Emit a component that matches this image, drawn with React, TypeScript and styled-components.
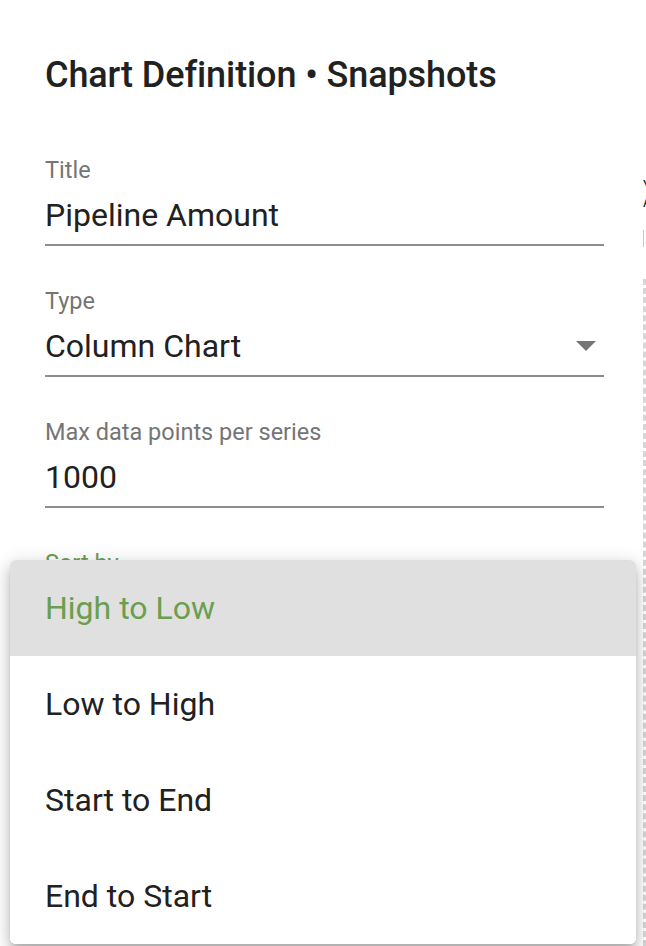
import React, { FC } from 'react';
import styled, { createGlobalStyle } from 'styled-components';

const GlobalStyle = createGlobalStyle`
    html, body {
        margin: 0;
        padding: 0;
        background: #fff;
        font-family: Roboto, "Noto Sans", sans-serif;
        color: #212121;
    }
    #root {
        width: 646px;
        height: 946px;
        overflow: hidden;
        position: relative;
    }
`

interface LabelProps {
    focused?: boolean;
}

interface ItemProps {
    selected?: boolean;
}

const Page = styled.div`
    display: flex;
    width: 646px;
    height: 946px;
    overflow: hidden;
    position: relative;
`

const FormPanel = styled.div`
    flex: 0 0 643px;
    box-sizing: border-box;
    padding: 53px 39px 0 45px;
    display: flex;
    flex-direction: column;
`

const Heading = styled.h1`
    margin: 0 0 59px;
    font-size: 36px;
    font-weight: 500;
    line-height: 44px;
    letter-spacing: -0.1px;
    color: #212121;
`

const Field = styled.div`
    display: flex;
    flex-direction: column;
    margin-bottom: 41px;
`

const Label = styled.label<LabelProps>`
    font-size: 23.5px;
    line-height: 28px;
    color: ${({focused}) => focused ? '#6b9e50' : '#757575'};
`

const Control = styled.div<LabelProps>`
    display: flex;
    align-items: center;
    justify-content: space-between;
    box-sizing: border-box;
    height: 62px;
    padding-top: 2px;
    border-bottom: 2px solid ${({focused}) => focused ? '#6b9e50' : '#8c8c8c'};
    font-size: 32px;
    color: #212121;
`

const Arrow = styled.span`
    width: 0;
    height: 0;
    margin-right: 8px;
    border-left: 10px solid transparent;
    border-right: 10px solid transparent;
    border-top: 10px solid #757575;
`

const SidePanel = styled.div`
    flex: 1 0 auto;
    display: flex;
    flex-direction: column;
    padding-top: 178px;
`

const SideText = styled.div`
    font-size: 14px;
    line-height: 16px;
    color: #212121;
    white-space: nowrap;
`

const SideInput = styled.div`
    margin-top: 20px;
    height: 18px;
    border-left: 1px solid #c8c8c8;
`

const DashedBox = styled.div`
    margin-top: 32px;
    height: 700px;
    border-left: 3px dashed #d6d6d6;
`

const Menu = styled.ul`
    position: absolute;
    left: 10px;
    top: 560px;
    width: 626px;
    margin: 0;
    padding: 0;
    list-style: none;
    background: #fff;
    border-radius: 6px;
    overflow: hidden;
    box-shadow: 0 5px 6px -3px rgba(0, 0, 0, 0.2), 0 9px 14px 1px rgba(0, 0, 0, 0.14), 0 3px 18px 2px rgba(0, 0, 0, 0.12);
`

const MenuItem = styled.li<ItemProps>`
    display: flex;
    align-items: center;
    height: 96px;
    padding-left: 35px;
    font-size: 32px;
    color: ${({selected}) => selected ? '#6b9e50' : '#212121'};
    background: ${({selected}) => selected ? '#e0e0e0' : '#fff'};
`

const sortOptions = ['High to Low', 'Low to High', 'Start to End', 'End to Start'];

const App: FC = () => {
    return (
        <Page>
            <GlobalStyle />
            <FormPanel>
                <Heading>Chart Definition • Snapshots</Heading>
                <Field>
                    <Label>Title</Label>
                    <Control>Pipeline Amount</Control>
                </Field>
                <Field>
                    <Label>Type</Label>
                    <Control>
                        Column Chart
                        <Arrow />
                    </Control>
                </Field>
                <Field>
                    <Label>Max data points per series</Label>
                    <Control>1000</Control>
                </Field>
                <Field>
                    <Label focused>Sort by</Label>
                    <Control focused>
                        High to Low
                        <Arrow />
                    </Control>
                </Field>
                <Field>
                    <Label>Series</Label>
                    <Control>Amount · SUM</Control>
                </Field>
            </FormPanel>
            <SidePanel>
                <SideText>Y</SideText>
                <SideText>A</SideText>
                <SideInput />
                <DashedBox />
            </SidePanel>
            <Menu>
                {sortOptions.map((option, i) => (
                    <MenuItem key={option} selected={i === 0}>{option}</MenuItem>
                ))}
            </Menu>
        </Page>
    )
}

export default App;
